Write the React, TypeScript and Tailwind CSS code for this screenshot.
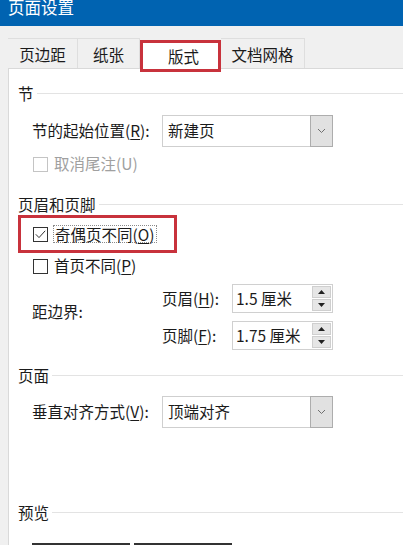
import React from "react";

const font = {
  fontFamily: '"Segoe UI", "Noto Sans CJK SC", "Noto Sans", sans-serif',
};

const Mn = ({ c }: { c: string }) => <span className="underline underline-offset-2">{c}</span>;

const Header = ({ title, className }: { title: string; className?: string }) => (
  <div className={"flex items-center h-[20px] pr-0 " + (className || "")}>
    <span className="leading-[20px]">{title}</span>
    <div className="flex-1 h-px bg-[#e3e3e3] ml-[3px]" />
  </div>
);

const Chevron = () => (
  <svg width="9" height="6" viewBox="0 0 9 6" fill="none">
    <path d="M1 1l3.5 3.5L8 1" stroke="#6f6f6f" strokeWidth="1" />
  </svg>
);

const Select = ({ value }: { value: string }) => (
  <div className="flex w-[171px] h-[32px] border border-[#cfcfcf] bg-white">
    <div className="flex-1 flex items-center pl-[5px] leading-none">{value}</div>
    <div className="w-[23px] -my-px -mr-px flex items-center justify-center bg-[#e1e1e1] border border-[#adadad]">
      <Chevron />
    </div>
  </div>
);

const Box = ({ checked, disabled }: { checked?: boolean; disabled?: boolean }) => (
  <div
    className={
      "w-[15px] h-[15px] border bg-white flex items-center justify-center " +
      (disabled ? "border-[#c4c4c4]" : "border-[#333333]")
    }
  >
    {checked && (
      <svg width="11" height="9" viewBox="0 0 11 9" fill="none">
        <path d="M0.8 4.3l3.2 3.3L10.2 0.8" stroke="#333" strokeWidth="1" />
      </svg>
    )}
  </div>
);

const Spinner = ({ value }: { value: string }) => (
  <div className="flex w-[101px] h-[29px] border border-[#d0d0d0] bg-white">
    <div className="flex-1 flex items-center pl-[3px] leading-none">{value}</div>
    <div className="w-[21px] flex flex-col gap-px p-px">
      <div className="flex-1 bg-[#e6e6e6] border border-[#cfcfcf] flex items-center justify-center">
        <svg width="7" height="4" viewBox="0 0 7 4">
          <path d="M3.5 0L7 4H0z" fill="#222" />
        </svg>
      </div>
      <div className="flex-1 bg-[#e6e6e6] border border-[#cfcfcf] flex items-center justify-center">
        <svg width="7" height="4" viewBox="0 0 7 4">
          <path d="M0 0h7L3.5 4z" fill="#222" />
        </svg>
      </div>
    </div>
  </div>
);

export default function App() {
  const tabs = ["页边距", "纸张", "版式", "文档网格"];
  const widths = ["w-[70px]", "w-[62px]", "w-[81px]", "w-[84px]"];
  return (
    <div
      className="w-[403px] h-[545px] overflow-hidden bg-[#f0f0f0] text-[15.5px] text-[#1b1b1b]"
      style={font}
    >
      <div className="h-[26px] bg-[#0063b1] text-white text-[16.5px] pl-[8px] overflow-hidden">
        <div className="leading-[16px] -mt-px">页面设置</div>
      </div>

      <div className="flex items-start pl-[8px] pt-[12px] h-[42px]">
        {tabs.map((t, i) =>
          i == 2 ? (
            <div
              key={i}
              className={
                widths[i] +
                " relative z-10 mt-[2px] h-[32px] bg-white border-[3px] border-[#c8323c] flex justify-center pt-[3px] leading-[20px]"
              }
            >
              <span className="pl-[6px]">{t}</span>
            </div>
          ) : (
            <div
              key={i}
              className={
                widths[i] +
                " h-[30px] border-t border-r border-[#dedede] flex items-center justify-center leading-[20px]"
              }
            >
              {t}
            </div>
          )
        )}
      </div>

      <div className="ml-[8px] bg-white border-l border-t border-[#d9d9d9] h-[600px] pt-[14px] pl-[9px]">
        <Header title="节" />
        <div className="flex items-center mt-[12px] pl-[14px]">
          <div className="w-[130px] leading-none">
            节的起始位置(<Mn c="R" />):
          </div>
          <Select value="新建页" />
        </div>
        <div className="flex items-center h-[20px] mt-[7px] pl-[15px] gap-[6px] text-[#a0a0a0]">
          <Box disabled />
          <span className="leading-none">取消尾注(U)</span>
        </div>

        <Header title="页眉和页脚" className="mt-[20px]" />
        <div className="mt-[1px] w-[159px] h-[38px] border-[3px] border-[#c8323c] flex items-center pl-[12px] gap-[5px]">
          <Box checked />
          <span className="border border-dotted border-[#8a8a8a] leading-[16px] px-px">
            奇偶页不同(<Mn c="O" />)
          </span>
        </div>
        <div className="flex items-center h-[20px] mt-[3px] pl-[15px] gap-[6px]">
          <Box />
          <span className="leading-none">
            首页不同(<Mn c="P" />)
          </span>
        </div>

        <div className="flex items-center mt-[8px] pl-[14px]">
          <div className="w-[130px] leading-none pb-[10px]">距边界:</div>
          <div className="flex flex-col gap-[8px]">
            <div className="flex items-center">
              <div className="w-[70px] leading-none">
                页眉(<Mn c="H" />):
              </div>
              <Spinner value="1.5 厘米" />
            </div>
            <div className="flex items-center">
              <div className="w-[70px] leading-none">
                页脚(<Mn c="F" />):
              </div>
              <Spinner value="1.75 厘米" />
            </div>
          </div>
        </div>

        <Header title="页面" className="mt-[15px]" />
        <div className="flex items-center mt-[11px] pl-[14px]">
          <div className="w-[130px] leading-none">
            垂直对齐方式(<Mn c="V" />):
          </div>
          <Select value="顶端对齐" />
        </div>

        <Header title="预览" className="mt-[74px]" />
        <div className="flex gap-[4px] mt-[21px] pl-[14px]">
          <div className="w-[98px] h-[30px] border-2 border-[#333] bg-white" />
          <div className="w-[98px] h-[30px] border-2 border-[#333] bg-white" />
        </div>
      </div>
    </div>
  );
}
